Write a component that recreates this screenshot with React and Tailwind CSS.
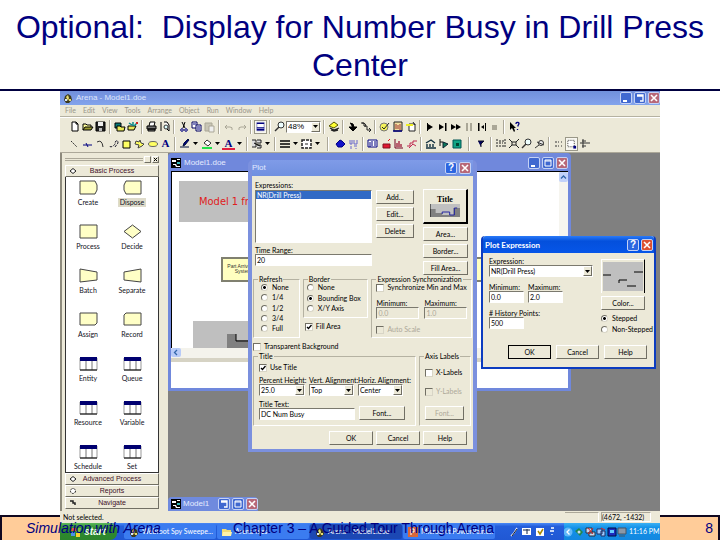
import React from "react";

const PANEL_FONT = "font-['Lato','Liberation_Sans',sans-serif]";

/* ---------- small drawings ---------- */

const GLYPHS = {
  page: <path d="M3 1h4l2 2v7H3zM7 1v2h2" fill="#fff" stroke="#000" />,
  open: <g><path d="M1 9V3h3l1 1h4v2" fill="#ffff9c" stroke="#000" /><path d="M1 9l2-3h8L9 9z" fill="#9c9c31" stroke="#000" /></g>,
  save: <g><path d="M1 1h9v9H1z" fill="#222" stroke="#000" /><path d="M3 1h5v4H3z" fill="#eee" /><path d="M4 7h3v3H4z" fill="#bbb" /></g>,
  attach: <g><path d="M1 2h6v5H1z" fill="#087b7b" stroke="#000" /><path d="M3 9V5h3l1 1h4l-1 4H3z" fill="#e8e858" stroke="#000" /></g>,
  detach: <g><path d="M1 9V5h8l-2 4z" fill="#e8e858" stroke="#000" /><path d="M2 2l3 2M6 1v4M10 2L7 5" stroke="#0a8a8a" strokeWidth="1.5" /><path d="M9 1l2 2M11 1L9 3" stroke="#d02020" /></g>,
  print: <g><path d="M3 5l1-4h5l-1 4" fill="#fff" stroke="#000" /><path d="M1 5h9v3H1zM2 8h7v2H2z" fill="#777" stroke="#000" /></g>,
  preview: <g><path d="M2 1v9M5 1h3l2 3v6" stroke="#000" fill="#fff" /><circle cx="7" cy="6" r="2" stroke="#333" fill="#dff" /><path d="M8 8l2 2" stroke="#000" /></g>,
  cut: <g><path d="M4 1l3 6M7 1L5 7" stroke="#000" fill="none" /><circle cx="4" cy="9" r="1.3" stroke="#000080" fill="none" /><circle cx="8" cy="9" r="1.3" stroke="#000080" fill="none" /></g>,
  copy: <g><path d="M1 1h5v6H1z" fill="#fff" stroke="#000060" /><path d="M5 4h5v6H5z" fill="#fff" stroke="#000060" /><path d="M6 6h3M6 8h3M2 3h3" stroke="#000080" /></g>,
  paste: <g><path d="M1 2h7v8H1z" fill="#c9c6b6" stroke="#aaa797" /><path d="M5 5h5v6H5z" fill="#eee" stroke="#aaa797" /></g>,
  undo: <path d="M2 6h5q3 0 2 3M4 4L2 6l2 2" fill="none" stroke="#aaa797" />,
  redo: <path d="M10 6H5Q2 6 3 9M8 4l2 2-2 2" fill="none" stroke="#aaa797" />,
  split: <g><path d="M2 1h8v9H2z" fill="#fff" stroke="#8d8dc0" /><path d="M2 2h8M2 7h8M2 9h8" stroke="#000080" strokeWidth="1.5" /></g>,
  zoom: <g><circle cx="7" cy="4" r="3" fill="#eff" stroke="#333" /><path d="M5 6l-4 4" stroke="#333" strokeWidth="1.4" /></g>,
  layers: <g><path d="M1 5l5-4 4 3-4 3z" fill="#ff3" stroke="#550" /><path d="M2 7l4 2 5-2M3 9l3 1 4-1" fill="none" stroke="#222" strokeWidth="1.3" /></g>,
  drop: <path d="M3 2q4 0 4 4h3l-4 4-4-4h3" fill="#000" stroke="#000" />,
  connect: <path d="M1 2h3v3h3v4h3M9 7l2 2-2 2M2 2q5 0 3 4" fill="none" stroke="#222" />,
  check: <g><circle cx="5" cy="6" r="4" fill="#f4f35a" stroke="#777" /><path d="M3 6l2 2 5-6" stroke="#222" fill="none" /></g>,
  report: <g><path d="M2 1h8v9H2z" fill="#f1dfa0" stroke="#222" /><path d="M4 3v5M6 4v4M8 3v6" stroke="#9c3131" /><path d="M1 10h9" stroke="#000080" strokeWidth="1.5" /></g>,
  note: <g><path d="M4 3h6v7H4z" fill="#fff" stroke="#222" /><path d="M1 3h7v2H1z" fill="#ee2" /><path d="M8 1l2 3" stroke="#222" /></g>,
  play: <path d="M3 2h1v8H3zM4 3l5 3-5 3z" fill="#000" />,
  step: <path d="M2 3l5 3-5 3zM8 2h1.5v8H8z" fill="#000" />,
  fast: <path d="M1 3l5 3-5 3zM6 3l5 3-5 3z" fill="#000" />,
  pause: <path d="M3 2h2v8H3zM7 2h2v8H7z" fill="#aaa797" />,
  restart: <path d="M2 2h1.500v8H2zM8 4L5 6l3 2zM9 2h1v8H9z" fill="#000" />,
  stop: <path d="M3 4h5v5H3z" fill="#aaa797" />,
  help: <g><path d="M2 1v8l2-2 2 4 1-1-1-3h2z" fill="#000" /><path d="M8 3q0-2 2-1.500t0 3v1M9.500 8v1" stroke="#000080" fill="none" strokeWidth="1.300" /></g>,
  line: <path d="M2 3l6 6" stroke="#333" strokeDasharray="2 1" />,
  poly: <path d="M1 7h9M4 5l2 4" stroke="#000080" fill="none" />,
  arc: <path d="M2 4q5-3 6 5" stroke="#333" fill="none" />,
  bezier: <path d="M2 8q0 2 3 0t2-4q3-3 3 1L7 9" stroke="#223" fill="none" strokeDasharray="3 1" />,
  box: <path d="M2 3h7v7H2z" fill="#ffff63" stroke="#000" />,
  polygon: <path d="M2 3l3 1 1-2 1 3 3 1-2 2-4 2 1-3-4-1z" fill="#ffff63" stroke="#444" />,
  ellipse: <ellipse cx="6" cy="6" rx="4.500" ry="2.500" fill="#ffff63" stroke="#666" />,
  pen: <path d="M1 9h9M4 8l1-3 4-4 1 1-4 5z" fill="#000080" stroke="#001040" />,
  bucket: <g><path d="M3 5l3-3 4 3-3 3z" fill="#fff" stroke="#333" /><path d="M1 9h10v2H1z" fill="#22e04a" /></g>,
  pattern: <g><path d="M1 2h4v7H1M6 2h4v3H6M6 7h4v3H6" fill="#ddd" stroke="#222" /><path d="M3 5l6 3" stroke="#000" /></g>,
  lines: <path d="M1 3h10M1 6h10M1 9h10" stroke="#000" strokeWidth="1.500" />,
  frame: <g><path d="M1 2h9v8H1z" fill="#fff" stroke="#222" strokeWidth="1.500" strokeDasharray="3 1" /><path d="M4 6h3" stroke="#222" /></g>,
  hex: <path d="M3 4l2-2 2 1 3 3-3 3H3L1 6z" fill="#1212c8" stroke="#000080" />,
  date: <path d="M2 2v4h2V2M6 2v4h3V2M3 8v3M6 8h3M8 10v1" fill="none" stroke="#6666cc" />,
  grid: <g><path d="M1 2h9v7H1z" fill="#fff" stroke="#000080" /><path d="M3 4v5M5 3v5M8 3v5" stroke="#000080" /></g>,
  level: <g><path d="M3 6h7v4H3z" fill="#e01830" stroke="#801020" /><path d="M8 3l2-2" stroke="#d22" /></g>,
  histo: <g><path d="M2 1v9h8" stroke="#700020" fill="none" /><path d="M4 5v4M6 3v6M8 6v3" stroke="#a01838" strokeWidth="1.300" /></g>,
  plot: <path d="M1 8h3V5h3V3h4M3 10l4-4 3 2" stroke="#c02850" fill="none" />,
  bank: <path d="M1 5l5-3 4 3M2 6v3M5 6v3M8 6v3M1 10h10" stroke="#123040" fill="none" strokeWidth="1.400" />,
  station: <g><path d="M2 1v7M2 4h3" stroke="#111" /><path d="M5 4l5 2-5 4z" fill="#087b5b" stroke="#123" /></g>,
  storage: <g><path d="M2 2h8v8H2z" fill="#12a585" stroke="#055" /><path d="M5 5h3v3H5z" fill="#043" /></g>,
  pointer: <path d="M2 3h6L5 6v3" fill="#000060" stroke="#112" />,
  fit: <path d="M2 1v9M10 1v9M4 5h4M4 3h5M4 8h5" stroke="#222" fill="none" strokeDasharray="2 1" />,
  fitx: <path d="M1 1l3 3M11 1L8 4M1 10l3-3M11 10L8 7M4 4h4v3H4z" stroke="#222" fill="none" />,
  zoomout: <g><circle cx="7" cy="5" r="2.500" fill="#eee" stroke="#333" /><path d="M1 10l4-3M3 4l7 3" stroke="#333" /></g>,
  dots: <path d="M2 4h2M2 8h2M8 4h1M8 8h1M5 4h1M5 8h1" stroke="#333" />,
  snap: <g><path d="M2 2h7v7H2z" fill="#fff" stroke="#333" strokeDasharray="1 1" /><path d="M8 8h3v3H8z" fill="#000080" /></g>,
  align: <path d="M4 1v9M1 5h10M3 3h4M3 8h4" stroke="#333" fill="none" />,
};

const Glyph = ({ name }) => (
  <svg viewBox="0 0 12 12" className="size-3" aria-hidden="true">{GLYPHS[name]}</svg>
);

const Tool = ({ name, pressed }) => (
  <button aria-label={name} className={`flex h-[14px] w-[13px] shrink-0 items-center justify-center ${pressed ? "border border-[#9a9888] bg-[#f8f7f0]" : ""}`}>
    <Glyph name={name} />
  </button>
);

const TextTool = ({ bar }) => (
  <button aria-label="Text" className={`h-[12px] w-[13px] shrink-0 text-center font-['Liberation_Serif',serif] text-[11px] leading-[11px] font-bold text-[#000080] ${bar ? "border-b-2 border-[#e02040]" : ""}`}>A</button>
);

const Sep = ({ wide }) => (
  <span className={`flex h-[14px] shrink-0 justify-center ${wide ? "w-[12px]" : "w-[6px]"}`}>
    <span className="w-px bg-[#aca899]" /><span className="w-px bg-white" />
  </span>
);

const Caret = () => (
  <button aria-label="More" className="flex w-[9px] shrink-0 justify-center">
    <svg viewBox="0 0 5 3" className="h-[3px] w-[5px]"><path d="M0 0h5L2.500 3z" fill="#000" /></svg>
  </button>
);

const Tools = ({ names }) => names.split(" ").map((n, i) => {
  if (n === "|") return <Sep key={i} />;
  if (n === "||") return <Sep key={i} wide />;
  if (n === "v") return <Caret key={i} />;
  if (n === "A") return <TextTool key={i} />;
  if (n === "A_") return <TextTool key={i} bar />;
  return <Tool key={i} name={n} pressed={n === "snap" || n === "split"} />;
});

/* ---------- window parts ---------- */

const CAPTION = {
  min: <path d="M3 8h4v2H3z" fill="#fff" />,
  max: <path d="M3 3h6v6H3zM3 4h6" fill="none" stroke="#fff" />,
  restore: <path d="M3 3h6v6H6M3 4h6" fill="none" stroke="#fff" strokeWidth="1.300" />,
  close: <path d="M3 3l6 6M9 3L3 9" stroke="#fff" strokeWidth="1.600" />,
  help: null,
};

function CaptionButton({ kind, bright }) {
  const tone = kind === "close"
    ? bright ? "bg-[#dc5030]" : "bg-[#b86878]"
    : bright ? "bg-[#2c66e0]" : "bg-[#4068d0]";
  return (
    <button aria-label={kind} className={`flex size-3 items-center justify-center rounded-[2px] border border-[#c5d2f5] font-['Liberation_Sans',sans-serif] text-[10px] leading-none font-bold text-white ${tone}`}>
      {kind === "help" ? "?" : <svg viewBox="0 0 12 12" className="size-3 shrink-0">{CAPTION[kind]}</svg>}
    </button>
  );
}

const ArenaIcon = () => (
  <svg viewBox="0 0 10 10" className="size-[10px] shrink-0" aria-hidden="true">
    <path d="M2 3l3-2 3 2 1 4-3 3H3L1 7z" fill="#3d3a1c" /><path d="M3 4l2-2 1 3-1 3zM6 6h2v2H6z" fill="#e8dd70" /><path d="M2 6h2v2H2z" fill="#d8e6ff" />
  </svg>
);

const DocIcon = () => (
  <svg viewBox="0 0 10 10" className="size-[10px] shrink-0" aria-hidden="true">
    <path d="M0 0h10v10H0z" fill="#000" /><path d="M1 2h4v2H1zM6 1h3v1H6zM2 6h3l1 2h3v1H5L4 7H2z" fill="#fff" /><path d="M6 4h3v2H6z" fill="#3bb" />
  </svg>
);

const BEVEL = "border border-t-white border-l-white border-r-[#716f64] border-b-[#716f64] bg-[#ece9d8]";
const SUNK = "border border-t-[#7b796e] border-l-[#7b796e] border-r-white border-b-white";

const Button = ({ children, className = "", disabled, primary }) => (
  <button disabled={disabled} className={`flex h-[14px] shrink-0 items-center justify-center disabled:text-[#aca899] ${primary ? "border border-black bg-[#ece9d8]" : BEVEL} ${className}`}>{children}</button>
);

const Radio = ({ name, label, checked }) => (
  <label className="flex items-center gap-[4px] leading-[9px] whitespace-nowrap">
    <input type="radio" name={name} defaultChecked={checked} className="size-[7px] shrink-0 appearance-none rounded-full border border-t-[#716f64] border-r-[#d8d5c6] border-b-[#d8d5c6] border-l-[#716f64] bg-white checked:bg-[radial-gradient(circle,#000_35%,#fff_45%)]" />
    {label}
  </label>
);

const Check = ({ label, checked, disabled }) => (
  <label className={`flex items-center gap-[3px] leading-[9px] whitespace-nowrap ${disabled ? "text-[#aca899]" : ""}`}>
    <span className="grid">
      <input type="checkbox" defaultChecked={checked} disabled={disabled} className="peer col-start-1 row-start-1 size-[8px] appearance-none border border-t-[#716f64] border-r-[#d8d5c6] border-b-[#d8d5c6] border-l-[#716f64] bg-white disabled:bg-[#ece9d8]" />
      <svg viewBox="0 0 8 8" className="pointer-events-none invisible col-start-1 row-start-1 size-[8px] peer-checked:visible"><path d="M2 4l1.500 1.500L6.500 2" stroke="#000" strokeWidth="1.300" fill="none" /></svg>
    </span>
    {label}
  </label>
);

const Field = ({ label, value, className = "", disabled }) => (
  <label className={`block leading-[8px] whitespace-nowrap ${className}`}>
    {label}
    <input defaultValue={value} disabled={disabled} className={`block h-[12px] w-full bg-white px-px disabled:bg-[#ece9d8] disabled:text-[#aca899] ${SUNK}`} />
  </label>
);

const Drop = ({ label, value, className = "" }) => (
  <label className={`block leading-[8px] whitespace-nowrap ${className}`}>
    {label}
    <span className={`grid h-[12px] items-center bg-white ${SUNK}`}>
      <select defaultValue={value} className="col-start-1 row-start-1 w-full appearance-none px-px leading-[9px]"><option>{value}</option></select>
      <span className={`pointer-events-none col-start-1 row-start-1 flex h-[10px] w-[9px] items-center justify-center justify-self-end ${BEVEL}`}>
        <svg viewBox="0 0 5 3" className="h-[3px] w-[5px]"><path d="M0 0h5L2.500 3z" fill="#000" /></svg>
      </span>
    </span>
  </label>
);

const Group = ({ title, className = "", inner = "", children }) => (
  <fieldset className={`border border-[#b5b2a2] border-r-white border-b-white ${className}`}>
    <legend className="ml-1 px-px leading-[8px] whitespace-nowrap">{title}</legend>
    <div className={`flex flex-col ${inner}`}>{children}</div>
  </fieldset>
);

/* ---------- template panel ---------- */

const SHAPES = {
  Create: <path d="M1 1h15l2 4v5l-2 4H1z" />,
  Dispose: <path d="M3 1h15v13H3L1 10V5z" />,
  Process: <path d="M1 1h17v13H1z" />,
  Decide: <path d="M1 7.500L9.500 1 18 7.500 9.500 14z" />,
  Batch: <path d="M1 1l17 3v8L1 14z" />,
  Separate: <path d="M18 1L1 4v8l17 2z" />,
  Assign: <path d="M1 1h17v10l-2 2H1z" />,
  Record: <path d="M3 1h15v12H1V3z" />,
};

function Module({ name, selected }) {
  const shape = SHAPES[name];
  return (
    <button className="flex h-[44px] flex-col items-center gap-[3px] pt-[3px]">
      <svg viewBox="0 0 19 15" className="h-[15px] w-[19px]" aria-hidden="true">
        {shape ? <g fill="#ffffc6" stroke="#444">{shape}</g> : (
          <g><path d="M1 2h17v12H1z" fill="#fff" stroke="#999" /><path d="M7 3v11M13 3v11" stroke="#777" /><path d="M1 14h17" stroke="#000" /><path d="M1 1h17v4H1z" fill="#000070" /></g>
        )}
      </svg>
      <span className={`px-[2px] leading-[9px] ${selected ? "bg-[#dedbca]" : ""}`}>{name}</span>
    </button>
  );
}

const MODULES = ["Create", "Dispose", "Process", "Decide", "Batch", "Separate", "Assign", "Record", "Entity", "Queue", "Resource", "Variable", "Schedule", "Set"];

function PanelTab({ icon, children }) {
  return (
    <button className={`relative h-[12px] w-full shrink-0 text-center text-[7px] leading-[10px] text-[#401028] ${BEVEL}`}>
      <svg viewBox="0 0 8 8" className="absolute top-px left-[3px] size-2" aria-hidden="true">{icon}</svg>
      {children}
    </button>
  );
}

const DIAMOND = <path d="M1 4l3-2.500L7 4 4 6.500z" fill="#fff" stroke="#222" />;

function TemplatePanel() {
  return (
    <aside className="flex min-h-0 w-[108px] shrink-0 flex-col border-l-2 border-[#8d8a7c] bg-[#ece9d8] pt-px pr-[9px] pb-[2px] pl-[3px]">
      <div className="flex h-[11px] shrink-0 items-center gap-px">
        <span className="h-[3px] flex-1 border-y border-[#aca899]" />
        <button aria-label="Pin" className={`size-[7px] ${BEVEL}`} />
        <button aria-label="Close" className={`flex size-[7px] items-center ${BEVEL}`}><svg viewBox="0 0 6 6"><path d="M1 1l4 4M5 1L1 5" stroke="#000" strokeWidth="1.200" /></svg></button>
      </div>
      <PanelTab icon={DIAMOND}>Basic Process</PanelTab>
      <div className={`grid min-h-0 flex-1 grid-cols-2 content-start overflow-hidden border-x border-b border-[#333] bg-white pr-[4px] text-[7px] text-[#112] ${PANEL_FONT}`}>
        {MODULES.map((m) => <Module key={m} name={m} selected={m === "Dispose"} />)}
      </div>
      <PanelTab icon={DIAMOND}>Advanced Process</PanelTab>
      <PanelTab icon={<circle cx="4" cy="4" r="2.500" fill="#fff" stroke="#222" strokeDasharray="2 1" />}>Reports</PanelTab>
      <PanelTab icon={<path d="M1 2h3v2h2v2" fill="none" stroke="#222" strokeWidth="1.500" />}>Navigate</PanelTab>
    </aside>
  );
}

/* ---------- MDI windows ---------- */

function ModelWindow() {
  return (
    <section className="absolute top-0 left-0 flex h-[238px] w-[403px] flex-col rounded-t-[4px] bg-[#7088dc] px-[3px] pb-[3px]">
      <header className="flex h-[18px] shrink-0 items-center gap-[3px] pt-px text-[8px] text-[#e4eaff]">
        <DocIcon /><span className="flex-1">Model1.doe</span>
        <span className="flex gap-[2px]"><CaptionButton kind="min" /><CaptionButton kind="max" /><CaptionButton kind="close" /></span>
      </header>
      <div className="relative flex-1 border-t border-l border-black bg-white">
        <div className="absolute top-[9px] left-[7px] h-[41px] w-[130px] bg-[#bfbfbf] pt-[14px] pl-[20px] font-['DejaVu_Sans_Condensed','DejaVu_Sans',sans-serif] text-[11px] leading-[13px] whitespace-nowrap text-[#e02020]">Model 1 from</div>
        <div className="absolute top-[85px] left-[49px] h-[25px] w-[44px] border-2 border-[#808070] bg-[#ffffc0] pt-[5px] text-center text-[5px] leading-[5px] text-[#333]">Part Arrives to System</div>
        <div className="absolute top-[85px] right-[14px] h-[25px] w-[80px] border-2 border-[#808070] bg-[#ffffc0]" />
        <div className="absolute top-[149px] left-[21px] h-[27px] w-[120px] bg-[#bfbfbf]">
          <svg viewBox="0 0 60 14" className="absolute bottom-0 left-[34px] h-[14px] w-[60px]"><path d="M0 0h9v6h14v8H0z" fill="#808080" /><path d="M9 0v7h50" fill="none" stroke="#000" /></svg>
        </div>
        <div className="absolute top-0 right-0 flex h-[176px] w-[9px] flex-col bg-[#f6f5ef]">
          <button aria-label="Scroll up" className="h-[10px] rounded-[2px] bg-[#c2d2fa]"><svg viewBox="0 0 9 9"><path d="M2 5.500L4.500 3 7 5.500" fill="none" stroke="#36a" strokeWidth="1.300" /></svg></button>
        </div>
      </div>
      <div className="flex h-[10px] shrink-0 bg-[#f4f3ec]">
        <button aria-label="Scroll left" className="h-[9px] w-[10px] rounded-[2px] bg-[#b8cbf8]"><svg viewBox="0 0 10 9"><path d="M6 2L3.500 4.500 6 7" fill="none" stroke="#36a" strokeWidth="1.300" /></svg></button>
      </div>
      <div className="h-[30px] shrink-0 border-t-4 border-[#d6d3c4] bg-white" />
    </section>
  );
}

function PlotDialog() {
  return (
    <section className={`absolute top-[7px] left-[80px] flex h-[292px] w-[229px] flex-col rounded-t-[5px] bg-[#7b90de] px-[4px] pb-[3px] text-[7px] text-black ${PANEL_FONT}`}>
      <header className="flex h-[16px] shrink-0 items-center justify-between bg-[linear-gradient(#7f9be8,#7090e0)] pr-[2px] font-['Liberation_Sans',sans-serif] text-[8px] text-[#e0e8ff]">
        Plot
        <span className="flex gap-[2px]"><CaptionButton kind="help" bright /><CaptionButton kind="close" /></span>
      </header>
      <div className="flex flex-1 flex-col bg-[#ece9d8] px-px">
        <div className="flex gap-[4px] pt-[4px] pl-[2px]">
          <div className="w-[117px]">
            <label htmlFor="expressions" className="block leading-[10px]">Expressions:</label>
            <div id="expressions" role="listbox" className={`h-[53px] bg-white ${SUNK}`}>
              <div role="option" aria-selected="true" className="bg-[#316ac5] px-px leading-[8px] text-white">NR(Drill Press)</div>
            </div>
            <Field label="Time Range:" value="20" className="pt-[3px]" />
          </div>
          <div className="flex w-[38px] flex-col gap-[3px] pt-[10px]">
            <Button>Add...</Button><Button>Edit...</Button><Button>Delete</Button>
          </div>
          <div className="mr-[4px] ml-auto flex w-[45px] flex-col gap-[3px] pt-[9px]">
            <button className="h-[35px] border border-t-white border-r-2 border-b-2 border-l-white border-r-black border-b-black px-[6px] font-['Liberation_Serif',serif] text-[8px] leading-[9px] font-bold">
              Title
              <svg viewBox="0 0 32 13" className="block h-[13px] w-full" preserveAspectRatio="none"><path d="M0 0h32v13H0z" fill="#c0c0c0" /><path d="M0 5h6v4h7v2h12V4h7v9H0z" fill="#808080" /><path d="M13 10V8h8v3h5V4h3" fill="none" stroke="#2222a0" /><path d="M0 0v13" stroke="#000" /></svg>
            </button>
            <Button>Area...</Button><Button>Border...</Button><Button>Fill Area...</Button>
          </div>
        </div>
        <div className="flex gap-[3px]">
          <Group title="Refresh" className="h-[63px] w-[47px]" inner="h-[50px] justify-between pl-[7px]">
            <Radio name="refresh" label="None" checked /><Radio name="refresh" label="1/4" /><Radio name="refresh" label="1/2" /><Radio name="refresh" label="3/4" /><Radio name="refresh" label="Full" />
          </Group>
          <div className="w-[66px]">
            <Group title="Border" className="h-[43px]" inner="h-[30px] justify-between pl-[3px]">
              <Radio name="border" label="None" /><Radio name="border" label="Bounding Box" checked /><Radio name="border" label="X/Y Axis" />
            </Group>
            <div className="pt-[4px] pl-[2px]"><Check label="Fill Area" checked /></div>
          </div>
          <Group title="Expression Synchronization" className="h-[63px] w-[101px]" inner="h-[51px] justify-between pl-[4px]">
            <Check label="Synchronize Min and Max" />
            <div className="flex gap-[5px]"><Field label="Minimum:" value="0.0" disabled className="w-[43px]" /><Field label="Maximum:" value="1.0" disabled className="w-[43px]" /></div>
            <Check label="Auto Scale" disabled />
          </Group>
        </div>
        <div className="pt-[4px]"><Check label="Transparent Background" /></div>
        <div className="flex gap-[3px] pt-px">
          <Group title="Title" className="h-[74px] w-[163px]" inner="gap-[4px] pt-[3px] pl-[5px]">
            <Check label="Use Title" checked />
            <div className="flex gap-[4px]"><Drop label="Percent Height:" value="25.0" className="w-[46px]" /><Drop label="Vert. Alignment:" value="Top" className="w-[45px]" /><Drop label="Horiz. Alignment:" value="Center" className="w-[45px]" /></div>
            <div className="flex items-end gap-[4px]"><Field label="Title Text:" value="DC Num Busy" className="w-[96px]" /><Button className="w-[46px]">Font...</Button></div>
          </Group>
          <Group title="Axis Labels" className="h-[74px] w-[52px]" inner="gap-[10px] pt-[8px] pl-[5px]">
            <Check label="X-Labels" /><Check label="Y-Labels" disabled /><Button className="w-[39px]" disabled>Font...</Button>
          </Group>
        </div>
        <div className="flex justify-end gap-[3px] pt-[5px] pr-[5px]">
          <Button className="w-[44px]">OK</Button><Button className="w-[44px]">Cancel</Button><Button className="w-[44px]">Help</Button>
        </div>
      </div>
    </section>
  );
}

function PlotExpressionDialog() {
  return (
    <section className={`absolute top-[83px] left-[313px] flex h-[133px] w-[175px] flex-col rounded-t-[4px] border-2 border-t-0 border-[#0c3cc0] bg-[#ece9d8] text-[7px] text-black ${PANEL_FONT}`}>
      <header className="flex h-[17px] shrink-0 items-center justify-between rounded-t-[3px] bg-[linear-gradient(#2b7bf8,#0450dc_30%,#0656e8)] pr-px pl-[2px] text-[8px] font-bold text-white">
        <span>Plot Expression</span>
        <span className="flex gap-[2px]"><CaptionButton kind="help" bright /><CaptionButton kind="close" bright /></span>
      </header>
      <div className="flex justify-between pt-[4px] pr-[9px] pl-[6px]">
        <div className="flex w-[104px] flex-col gap-[6px]">
          <Drop label="Expression:" value="NR(Drill Press)" />
          <div className="flex gap-[4px]"><Field label="Minimum:" value="0.0" className="w-[35px]" /><Field label="Maximum:" value="2.0" className="w-[35px]" /></div>
          <Field label="# History Points:" value="500" className="w-[35px]" />
        </div>
        <div className="flex w-[44px] flex-col pt-[2px]">
          <div className="flex h-[34px] shrink-0 items-center border-t border-l border-white border-r border-r-black">
            <svg viewBox="0 0 40 29" className="mx-px h-[29px] w-full" preserveAspectRatio="none"><path d="M0 0h40v29H0z" fill="#bfbfbf" /><path d="M0 13h8M31 10h9M16 21v-3h8M24 24h9" fill="none" stroke="#000" /></svg>
          </div>
          <Button className="mt-[3px]">Color...</Button>
          <div className="flex flex-col gap-[2px] pt-[4px]"><Radio name="step" label="Stepped" checked /><Radio name="step" label="Non-Stepped" /></div>
        </div>
      </div>
      <div className="mt-auto flex justify-end gap-[5px] pr-[7px] pb-[8px]">
        <Button primary className="w-[43px]">OK</Button><Button className="w-[43px]">Cancel</Button><Button className="w-[43px]">Help</Button>
      </div>
    </section>
  );
}

/* ---------- Windows taskbar ---------- */

const TaskFolder = () => <svg viewBox="0 0 10 10" className="size-[10px] shrink-0"><path d="M0 2h4l1 1h4v6H0z" fill="#f4dc74" /><path d="M1 5h9L9 9H0z" fill="#fff2a8" /></svg>;
const TaskPpt = () => <svg viewBox="0 0 10 10" className="size-[10px] shrink-0"><path d="M0 0h10v10H0z" fill="#d86838" /><path d="M3 8V2h3v3H3" fill="none" stroke="#fff" /></svg>;

const Task = ({ icon, children, active }) => (
  <button className={`flex h-[15px] w-[92px] shrink-0 items-center gap-[3px] rounded-[2px] pl-[5px] whitespace-nowrap ${active ? "bg-[#1c48b4]" : "bg-[#3b7cf0]"}`}>{icon}{children}</button>
);

function Taskbar() {
  return (
    <nav className={`flex h-[17px] shrink-0 items-center gap-px overflow-hidden bg-[linear-gradient(#4a8af6,#245edb_20%,#2058d4)] text-[7px] text-white ${PANEL_FONT}`}>
      <button className="mr-[6px] flex h-full w-[57px] shrink-0 items-center justify-center gap-[3px] rounded-r-[7px] bg-[linear-gradient(#5cb85c,#2f8a30_30%,#2c862c)] font-['Liberation_Sans',sans-serif] text-[10px] font-bold text-[#f0fff0] italic">
        <svg viewBox="0 0 10 10" className="size-[10px]"><path d="M1 1h4v3H0z" fill="#e8582c" /><path d="M6 1h4L9 5H5z" fill="#7ac043" /><path d="M0 5h4v4H0z" fill="#4a90e8" /><path d="M5 6h4v4H5z" fill="#f8d030" /></svg>
        start
      </button>
      <Task icon={<ArenaIcon />}>Webroot Spy Sweepe...</Task>
      <Task icon={<TaskFolder />}>Arena files</Task>
      <Task icon={<ArenaIcon />} active>Arena - Model1.doe</Task>
      <Task icon={<TaskPpt />}>Microsoft PowerPoint...</Task>
      <svg viewBox="0 0 54 12" className="ml-auto h-[12px] w-[54px] shrink-0" aria-hidden="true">
        <path d="M2 10l3-3 3-5" stroke="#dfe6ff" strokeWidth="1.500" fill="none" /><path d="M3 10L8 3" stroke="#222" />
        <path d="M13 2h9v7h-9z" fill="#fff" /><path d="M14 4h7M18 3v5" stroke="#124" />
        <path d="M27 2h8v8h-8z" fill="#fff" /><path d="M29 5l2 3 3-5" stroke="#a80" strokeWidth="1.500" fill="none" />
        <path d="M42 2h3M41 5h4M43 8v1" stroke="#fff" strokeWidth="1.300" />
      </svg>
      <div className="flex h-full w-[96px] shrink-0 items-center gap-px bg-[linear-gradient(#3ab0f4,#1290e8_30%,#1488e0)] whitespace-nowrap">
        <svg viewBox="0 0 64 12" className="h-[12px] w-[64px] shrink-0" aria-hidden="true">
          <circle cx="4" cy="6" r="4.500" fill="#60b8f8" /><path d="M5.500 3.500L3 6l2.500 2.500" stroke="#fff" strokeWidth="1.300" fill="none" />
          <path d="M11 5l4-3 4 4-3 4z" fill="#208850" /><circle cx="15" cy="6" r="1.500" fill="#cde" />
          <path d="M22 2h6v5h-6zM25 6h6v4h-6z" fill="#c8d4ea" stroke="#234" /><path d="M24 2l5 6M29 2l-5 6" stroke="#d22" />
          <path d="M33 3h5v5h-5zM37 5h4v5h-4z" fill="#9cc8ff" stroke="#236" /><path d="M37 2l4 2" stroke="#d22" />
          <path d="M44 2h8v8h-8z" fill="#1c2cc0" stroke="#014" /><path d="M46 4h4v3h-4z" fill="#6cf" />
          <path d="M54 2h8v6h-8zM55 10h6" fill="#8a98a8" stroke="#456" />
        </svg>
        11:16 PM
      </div>
    </nav>
  );
}

/* ---------- application ---------- */

function ArenaWindow() {
  return (
    <div className="relative z-10 mx-[60px] flex min-h-0 flex-1 flex-col overflow-hidden bg-[#ece9d8] font-['Liberation_Sans',sans-serif]">
      <header className="flex h-[14px] shrink-0 items-center gap-[3px] bg-[linear-gradient(#7090dc,#7b98e4_50%,#82a4ec)] pl-[3px] text-[8px] text-[#dfe6fb]">
        <ArenaIcon /><span className="flex-1">Arena - Model1.doe</span>
        <span className="flex gap-[2px]"><CaptionButton kind="min" /><CaptionButton kind="restore" /><CaptionButton kind="close" /></span>
      </header>
      <nav className={`flex h-[12px] shrink-0 items-center gap-[7px] border-b border-[#b5b2a2] pl-[5px] text-[7px] text-[#99968a] ${PANEL_FONT}`}>
        {["File", "Edit", "View", "Tools", "Arrange", "Object", "Run", "Window", "Help"].map((m) => <button key={m}>{m}</button>)}
      </nav>
      <div className="flex h-[18px] shrink-0 items-center border-t border-white pl-[8px]">
        <Tools names="page open save | attach detach | print preview | cut copy paste | undo redo | split | zoom" />
        <label className={`grid h-[12px] w-[35px] shrink-0 items-center bg-white text-[8px] text-black ${SUNK}`}>
          <select aria-label="Zoom" defaultValue="48%" className="col-start-1 row-start-1 appearance-none px-px leading-[10px]"><option>48%</option></select>
          <span className={`pointer-events-none col-start-1 row-start-1 flex h-[10px] w-[9px] items-center justify-center justify-self-end ${BEVEL}`}><svg viewBox="0 0 5 3" className="h-[3px] w-[5px]"><path d="M0 0h5L2.500 3z" fill="#000" /></svg></span>
        </label>
        <Tools names="| layers | drop connect | check report note | play step fast pause restart stop | help" />
      </div>
      <div className="flex h-[18px] shrink-0 items-center border-b border-[#aca899] pl-[8px]">
        <Tools names="line poly arc bezier box polygon ellipse A | pen v bucket v A_ v | pattern v | lines v frame v || hex date | grid level histo plot | bank station storage || pointer | fit fitx zoom zoomout | dots snap align" />
      </div>
      <div className="flex min-h-0 flex-1">
        <TemplatePanel />
        <main className="relative flex-1 overflow-hidden bg-[#808080]">
          <ModelWindow />
          <PlotDialog />
          <PlotExpressionDialog />
          <div className="absolute bottom-0 left-0 flex h-[14px] w-[90px] items-center gap-[2px] rounded-t-[4px] bg-[#6f8ade] pl-[3px] text-[8px] text-[#e4eaff]">
            <DocIcon /><span className="flex-1">Model1</span><CaptionButton kind="restore" /><CaptionButton kind="max" /><CaptionButton kind="close" />
          </div>
        </main>
      </div>
      <footer className={`flex h-[12px] shrink-0 items-center justify-between pl-[3px] text-[7px] text-black ${PANEL_FONT}`}>
        <span>Not selected.</span>
        <span className="flex gap-[2px] pr-[9px]"><span className="h-[10px] w-[34px] border-t border-r border-t-[#aca899] border-r-white" /><span className="w-[50px] border border-t-[#aca899] border-r-white border-b-white border-l-[#aca899] leading-[8px]">(4672, -1432)</span></span>
      </footer>
      <Taskbar />
    </div>
  );
}

export default function App() {
  return (
    <div className="relative flex h-screen flex-col overflow-hidden bg-white font-['Liberation_Sans',sans-serif] text-[#000080]">
      <h1 className="h-[89px] shrink-0 px-2 pt-[8px] text-center text-[32px] leading-[38px] whitespace-pre-wrap">{"Optional:  Display for Number Busy in Drill Press Center"}</h1>
      <hr className="h-[2px] shrink-0 border-0 bg-[#000040]" />
      <div className="absolute inset-x-0 bottom-0 h-[25px] border-2 border-b-0 border-[#100820] bg-[#ffcc99]" />
      <ArenaWindow />
      <footer className="pointer-events-none absolute inset-x-0 bottom-0 z-20 flex h-[24px] items-center pr-[7px] pl-[26px] text-[14px]">
        <span className="w-[207px] italic">Simulation with Arena</span>
        <span className="flex-1">Chapter 3 – A Guided Tour Through Arena</span>
        <span>8</span>
      </footer>
    </div>
  );
}
